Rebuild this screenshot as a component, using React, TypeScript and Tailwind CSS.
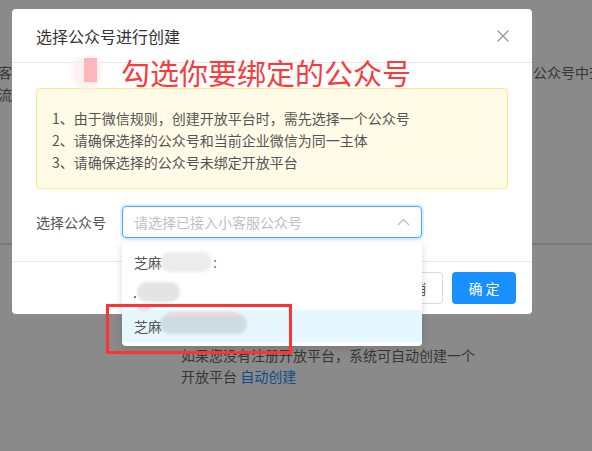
import React from "react";

const font = "font-['Noto_Sans_CJK_SC','Noto_Sans',sans-serif]";

function Blob({ className }: { className: string }) {
  return <span className={`inline-block rounded-full blur-[1.5px] ${className}`} />;
}

export default function App() {
  return (
    <div className={`relative w-[592px] h-[451px] overflow-hidden bg-white ${font}`}>
      {/* page behind the modal */}
      <div className="flex flex-col h-full">
        <div className="flex justify-between pt-[61px] text-[14px] leading-[22px] text-[#666]">
          <div className="-ml-[2px] flex flex-col">
            <span>客户</span>
            <span>流</span>
          </div>
          <div className="w-[59px] whitespace-nowrap overflow-hidden">公众号中查看</div>
        </div>
        <div className="mt-[138px] h-[2px] bg-[#e2e2e2]" />
        <div className="pl-[181px] pt-[100px] text-[14px] leading-[21px] text-[#666]">
          <div>如果您没有注册开放平台，系统可自动创建一个</div>
          <div>
            开放平台 <span className="text-[#1890ff]">自动创建</span>
          </div>
        </div>
      </div>

      {/* mask */}
      <div className="absolute inset-0 bg-black/[0.46]" />

      {/* modal */}
      <div className="absolute left-[12px] top-[9px] w-[520px] h-[305px] bg-white rounded-[4px] flex flex-col">
        <div className="h-[54px] flex items-center justify-between px-[24px] border-b border-[#e8e8e8]">
          <span className="text-[16px] text-[#333]">选择公众号进行创建</span>
          <svg width="14" height="14" viewBox="0 0 14 14" className="mr-[-2px]">
            <path d="M1.5 1.5L12.5 12.5M12.5 1.5L1.5 12.5" stroke="#9a9a9a" strokeWidth="1.4" />
          </svg>
        </div>
        <div className="flex-1 px-[24px] pt-[25px]">
          <div className="border border-[#ffe58f] bg-[#fffbe6] rounded-[4px] pt-[18px] pb-[15px] px-[15px] text-[14px] leading-[22px] text-[#555]">
            <div>1、由于微信规则，创建开放平台时，需先选择一个公众号</div>
            <div>2、请确保选择的公众号和当前企业微信为同一主体</div>
            <div>3、请确保选择的公众号未绑定开放平台</div>
          </div>
          <div className="mt-[17px] flex items-center">
            <span className="w-[86px] text-[14px] text-[#555]">选择公众号</span>
            <div className="w-[300px] h-[32px] rounded-[4px] border border-[#40a9ff] shadow-[0_0_0_2px_rgba(24,144,255,0.15)] flex items-center justify-between pl-[11px] pr-[11px]">
              <span className="text-[14px] text-[#bfbfbf]">请选择已接入小客服公众号</span>
              <svg width="13" height="8" viewBox="0 0 13 8">
                <path d="M1 7L6.5 1.5L12 7" fill="none" stroke="#bfbfbf" strokeWidth="1.3" />
              </svg>
            </div>
          </div>
        </div>
        <div className="h-[53px] border-t border-[#e8e8e8] flex items-center justify-end gap-[9px] px-[16px]">
          <button className="w-[64px] h-[32px] rounded-[4px] border border-[#d9d9d9] bg-white text-[14px] text-[#555]">
            取 消
          </button>
          <button className="w-[64px] h-[32px] rounded-[4px] bg-[#1890ff] text-[14px] text-white">
            确 定
          </button>
        </div>
      </div>

      {/* dropdown */}
      <div className="absolute left-[122px] top-[242px] w-[300px] py-[4px] bg-white rounded-[4px] shadow-[0_2px_8px_rgba(0,0,0,0.15)] text-[14px] text-[#555]">
        <div className="h-[32px] flex items-center px-[12px]">
          <span>芝麻</span>
          <Blob className="w-[52px] h-[20px] bg-[#ececec] -ml-[2px]" />
          <span className="ml-[1px] text-[#777]">:</span>
        </div>
        <div className="h-[32px] flex items-center px-[12px]">
          <span className="w-[2px] h-[2px] bg-[#777] mt-[6px]" />
          <span className="relative inline-block ml-[1px]">
            <Blob className="w-[43px] h-[20px] bg-[#e4e4e4]" />
            <span className="absolute left-0 bottom-[-4px] w-[14px] h-[6px] rounded-full bg-[#f6dde0] blur-[1px]" />
          </span>
        </div>
        <div className="h-[32px] flex items-center px-[12px] bg-[#e6f7ff]">
          <span>芝麻</span>
          <span className="relative inline-block -ml-[2px]">
            <Blob className="w-[87px] h-[20px] bg-[#cfdbe2]" />
            <span className="absolute left-[8px] top-[-2px] w-[70px] h-[4px] rounded-full bg-[#f2d6dc] blur-[1px]" />
          </span>
        </div>
      </div>

      {/* annotations */}
      <div className="absolute left-[72px] top-[56px] w-[30px] h-[34px] rounded-full bg-[#fdf0f0] blur-[2px]" />
      <div className="absolute left-[84px] top-[58px] w-[13px] h-[24px] bg-[#ffb6bb] blur-[0.5px]" />
      <div className="absolute left-[121px] top-[52px] text-[29px] leading-[40px] text-[#fa3b3b] whitespace-nowrap">
        勾选你要绑定的公众号
      </div>
      <div className="absolute left-[106px] top-[304px] w-[186px] h-[50px] border-[3px] border-[#ff3333]" />
    </div>
  );
}
